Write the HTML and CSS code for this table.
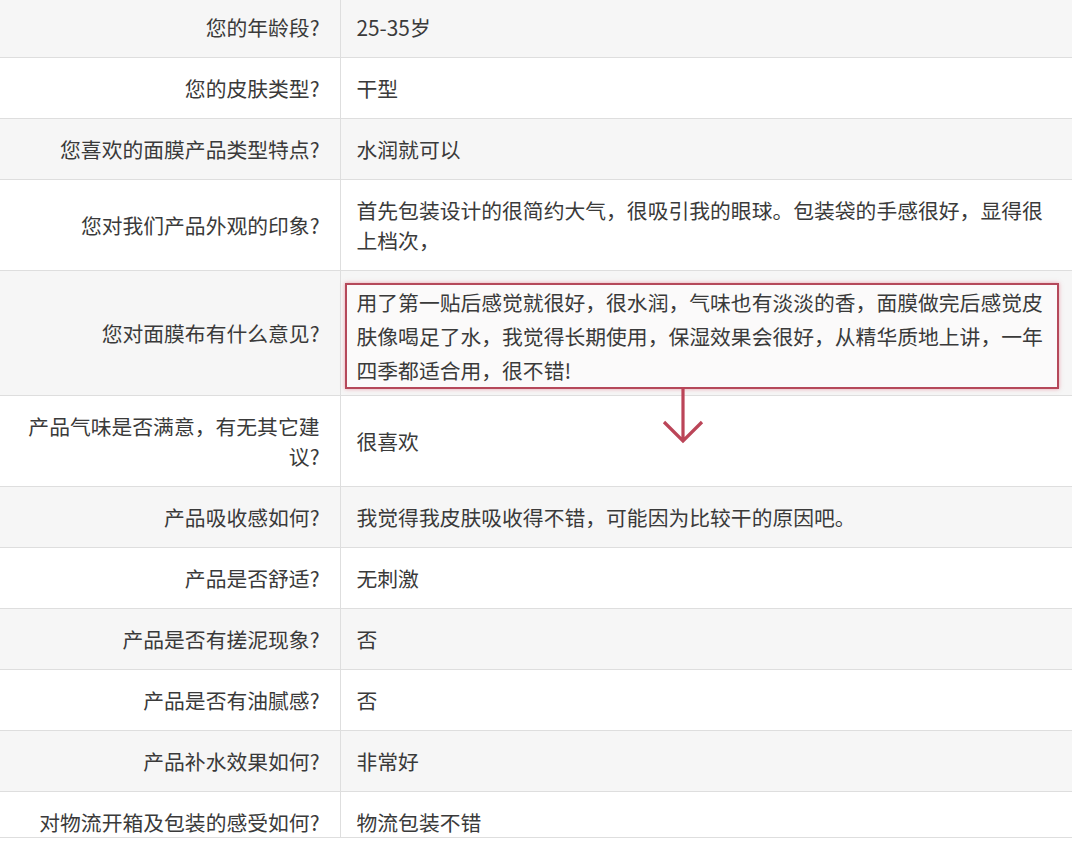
FILE: index.html
```
<!DOCTYPE html>
<html lang="zh-CN">
<head>
  <meta charset="UTF-8" />
  <meta name="viewport" content="width=device-width, initial-scale=1.0"/>
  <title>面膜试用反馈</title>
  <link rel="stylesheet" href="styles.css">
</head>
<body>

<table class="survey">
  <colgroup>
    <col class="q-col">
    <col>
  </colgroup>
  <tr>
    <td class="q">您的年龄段?</td>
    <td class="a">25-35岁</td>
  </tr>
  <tr>
    <td class="q">您的皮肤类型?</td>
    <td class="a">干型</td>
  </tr>
  <tr>
    <td class="q">您喜欢的面膜产品类型特点?</td>
    <td class="a">水润就可以</td>
  </tr>
  <tr>
    <td class="q">您对我们产品外观的印象?</td>
    <td class="a">首先包装设计的很简约大气，很吸引我的眼球。包装袋的手感很好，显得很上档次，</td>
  </tr>
  <tr>
    <td class="q">您对面膜布有什么意见?</td>
    <td class="a marked">
      <div class="highlight">
        用了第一贴后感觉就很好，很水润，气味也有淡淡的香，面膜做完后感觉皮肤像喝足了水，我觉得长期使用，保湿效果会很好，从精华质地上讲，一年四季都适合用，很不错!
        <svg class="arrow" width="44" height="58" viewBox="0 0 44 58">
          <path d="M22 0 V54 M3 35 L22 54 L41 35" fill="none" stroke="#bb4558" stroke-width="3.2"/>
        </svg>
      </div>
    </td>
  </tr>
  <tr>
    <td class="q">产品气味是否满意，有无其它建议?</td>
    <td class="a">很喜欢</td>
  </tr>
  <tr>
    <td class="q">产品吸收感如何?</td>
    <td class="a">我觉得我皮肤吸收得不错，可能因为比较干的原因吧。</td>
  </tr>
  <tr>
    <td class="q">产品是否舒适?</td>
    <td class="a">无刺激</td>
  </tr>
  <tr>
    <td class="q">产品是否有搓泥现象?</td>
    <td class="a">否</td>
  </tr>
  <tr>
    <td class="q">产品是否有油腻感?</td>
    <td class="a">否</td>
  </tr>
  <tr>
    <td class="q">产品补水效果如何?</td>
    <td class="a">非常好</td>
  </tr>
  <tr>
    <td class="q">对物流开箱及包装的感受如何?</td>
    <td class="a">物流包装不错</td>
  </tr>
</table>

</body>
</html>
```

FILE: styles.css
```
body {
  margin: 0;
  background: #ffffff;
  font-family: "Noto Sans CJK SC", "Liberation Sans", sans-serif;
  color: #3a3a3a;
}
.survey {
  width: 100%;
  margin-top: -3px;
  border-collapse: collapse;
  table-layout: fixed;
  font-size: 20.8px;
  line-height: 30px;
}
.q-col {
  width: 340px;
}
.survey tr:nth-child(odd) {
  background: #f6f6f6;
}
.survey tr:nth-child(even) {
  background: #ffffff;
}
.survey td {
  border-bottom: 1px solid #dedede;
  padding: 15px 20px 15px 16px;
  vertical-align: middle;
}
.survey td.q {
  text-align: right;
  padding: 15px 20px 15px 13px;
  border-right: 1px solid #dedede;
}
.survey tr:last-child td {
  padding-bottom: 0;
}
.survey td.marked {
  padding: 12px 13px 6px 4px;
}
.highlight {
  position: relative;
  border: 2px solid #b5485a;
  box-shadow: 0 0 4px rgba(220, 90, 110, 0.55);
  background: #fbfafa;
  padding: 0 10px;
  line-height: 34px;
}
.arrow {
  position: absolute;
  left: 314px;
  top: 100%;
}
```
